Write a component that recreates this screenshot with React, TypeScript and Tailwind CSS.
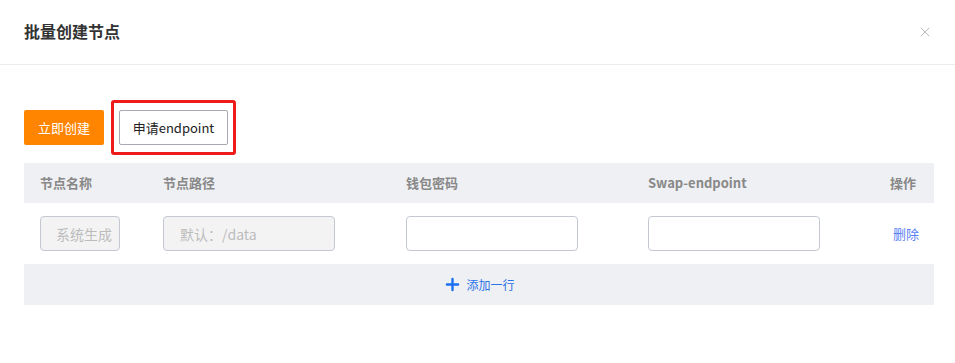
import { Plus, X } from 'lucide-react'

const font = { fontFamily: '"Noto Sans CJK SC", "Noto Sans", sans-serif' }

export default function App() {
  return (
    <div className="w-[955px] h-[363px] bg-white text-[#333]" style={font}>
      {/* Header */}
      <div className="h-[65px] border-b border-[#ececec] flex items-center justify-between pl-6 pr-[22px]">
        <h2 className="text-[16px] font-bold text-[#333] leading-none pb-[2px]">批量创建节点</h2>
        <X className="w-[16px] h-[16px] text-[#b8b8b8]" strokeWidth={1.5} />
      </div>

      <div className="pl-6 pr-[21px] pt-[35px]">
        {/* Actions */}
        <div className="flex items-center gap-[7px]">
          <button className="w-[80px] h-[35px] rounded-[2px] bg-[#ff8400] text-white text-[13px]">立即创建</button>
          <div className="border-[3px] border-[#ee1b1b] rounded-[3px] px-[5px] py-[7px]">
            <button className="w-[109px] h-[35px] border border-[#a9a9b1] rounded-[2px] bg-white text-[#222] text-[13px]">申请endpoint</button>
          </div>
        </div>

        {/* Table */}
        <div className="mt-[8px]">
          <div className="h-[40px] bg-[#eff0f4] grid grid-cols-[123px_243px_242px_242px_1fr] pl-4 items-center text-[13px] font-bold text-[#888]">
            <div>节点名称</div>
            <div>节点路径</div>
            <div>钱包密码</div>
            <div>Swap-endpoint</div>
            <div>操作</div>
          </div>
          <div className="h-[61px] grid grid-cols-[123px_243px_242px_242px_1fr] pl-4 items-center text-[13px]">
            <div>
              <input disabled placeholder="系统生成" className="w-[80px] h-[35px] border border-[#c3c8d3] rounded-[4px] bg-[#f3f3f4] pl-[15px] pr-0 text-[14px] placeholder:text-[#bcbcbc]" />
            </div>
            <div>
              <input disabled placeholder="默认：/data" className="w-[172px] h-[35px] border border-[#c3c8d3] rounded-[4px] bg-[#f3f3f4] px-[16px] text-[14px] placeholder:text-[#bcbcbc]" />
            </div>
            <div>
              <input className="w-[172px] h-[35px] border border-[#c3c8d3] rounded-[4px] bg-white px-[12px] text-[14px] outline-none" />
            </div>
            <div>
              <input className="w-[172px] h-[35px] border border-[#c3c8d3] rounded-[4px] bg-white px-[12px] text-[14px] outline-none" />
            </div>
            <div className="pl-[3px] text-[#5a7ff5]">删除</div>
          </div>
          <div className="h-[41px] bg-[#eff0f4] flex items-center justify-center gap-[4px] text-[12px] text-[#2a72e8]">
            <Plus className="w-[19px] h-[19px] text-[#1a6ff0]" strokeWidth={3} />
            <span>添加一行</span>
          </div>
        </div>
      </div>
    </div>
  )
}
